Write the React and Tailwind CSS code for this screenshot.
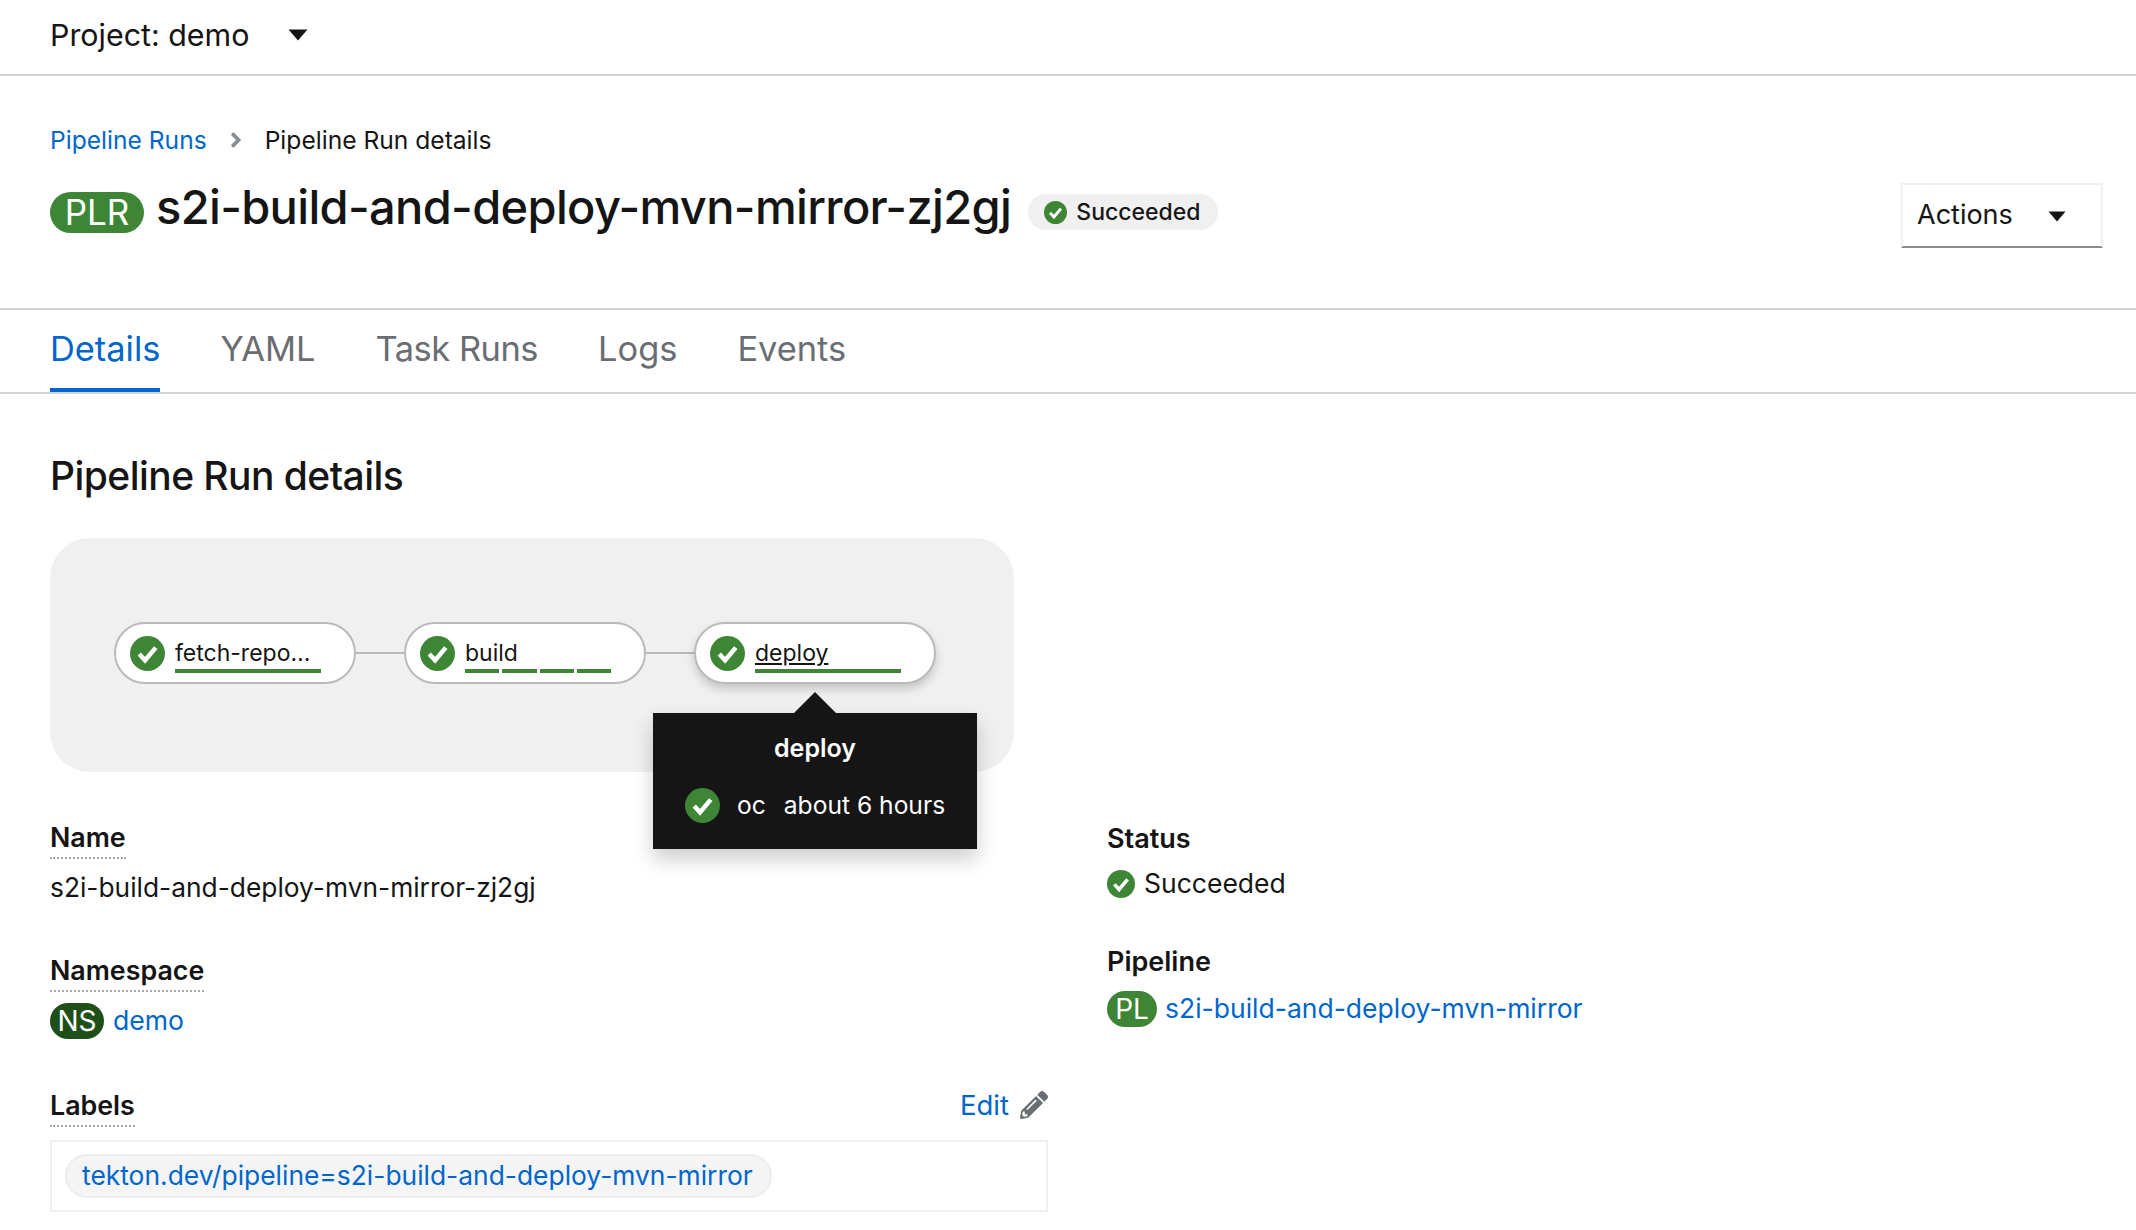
import React from "react";
import { FaAngleRight, FaPencilAlt } from "react-icons/fa";

const FONT = { fontFamily: '"Inter", "Noto Sans", sans-serif' };

const CheckIcon = ({ className }) => (
  <svg viewBox="0 0 36 36" className={className}>
    <circle cx="18" cy="18" r="18" fill="#3e8635" />
    <path d="M9.5 18.5 L15.5 25 L26.5 12" fill="none" stroke="#fff" strokeWidth="4.6" />
  </svg>
);

const Caret = ({ className }) => (
  <svg viewBox="0 0 20 12" className={className}>
    <path d="M0.5 0.5 H19.5 L10 11.5 Z" fill="#151515" />
  </svg>
);

const Node = ({ label, segments, hovered }) => (
  <div
    className={`flex h-[62px] w-[242px] shrink-0 items-start rounded-[31px] border-2 border-[#b8bbbe] bg-white pl-[14px] pt-[12px] ${
      hovered ? "shadow-[0_5px_10px_rgba(3,3,3,0.18)]" : ""
    }`}
  >
    <CheckIcon className="h-[35px] w-[35px] shrink-0" />
    <div className="ml-[10px] mt-[2px] w-[146px]">
      <div className={`h-[30px] text-[23px] leading-[30px] text-[#151515] ${hovered ? "underline" : ""}`}>{label}</div>
      <div className="mt-px flex h-1 gap-[3px]">
        {Array.from({ length: segments }).map((_, i) => (
          <div key={i} className="h-1 flex-1 bg-[#3e8635]" />
        ))}
      </div>
    </div>
  </div>
);

const Connector = () => <div className="h-[2px] w-[48px] shrink-0 bg-[#b8bbbe]" />;

const Label = ({ children }) => (
  <div className="inline-block h-[38px] border-b-2 border-dotted border-[#a8a8a8] text-[26.8px] font-semibold leading-[32px] text-[#151515]">
    {children}
  </div>
);

export default function App() {
  return (
    <div style={FONT} className="h-[1230px] w-[2136px] overflow-hidden bg-white text-[#151515]">
      {/* Project bar */}
      <div className="flex h-[76px] items-center border-b-2 border-[#d2d2d2] pb-[4px] pl-[50px]">
        <span className="text-[30.4px] leading-[40px]">Project: demo</span>
        <Caret className="ml-[39px] h-[12px] w-[20px]" />
      </div>

      {/* Page heading */}
      <div className="h-[234px] border-b-2 border-[#d2d2d2] pl-[50px] pr-[33px] pt-[48px]">
        <div className="flex h-[32px] items-center text-[24.6px] leading-[32px]">
          <a className="text-[#06c]">Pipeline Runs</a>
          <FaAngleRight className="mx-[17px] text-[#8a8d90]" size={24} />
          <span>Pipeline Run details</span>
        </div>
        <div className="mt-[27px] flex h-[64px] items-center justify-between">
          <div className="flex items-center">
            <span className="mb-[5px] flex h-[41px] w-[94px] items-center justify-center rounded-[21px] bg-[#3e8635] text-[35px] text-white">
              PLR
            </span>
            <h1 className="mb-[16px] ml-[12px] text-[47px] font-medium leading-[48px] tracking-[-0.66px]">
              s2i-build-and-deploy-mvn-mirror-zj2gj
            </h1>
            <span className="mb-[6px] ml-[17px] flex h-[36px] w-[190px] items-center rounded-[18px] bg-[#f0f0f0] pl-[16px] text-[23px] font-medium">
              <CheckIcon className="mr-[9px] h-[23px] w-[23px]" />
              Succeeded
            </span>
          </div>
          <button className="flex h-[65px] w-[202px] items-center border-x-2 border-y-2 border-[#f0f0f0] border-b-[#8a8d90] pl-[14px] text-left text-[27px]">
            Actions
            <Caret className="ml-[35px] mt-[2px] h-[11px] w-[18px]" />
          </button>
        </div>
      </div>

      {/* Tabs */}
      <div className="flex h-[84px] gap-[60px] border-b-2 border-[#d2d2d2] pl-[50px]">
        {["Details", "YAML", "Task Runs", "Logs", "Events"].map((tab, i) => (
          <div
            key={tab}
            className={`flex h-[82px] items-center border-b-4 text-[34.4px] ${
              i === 0 ? "border-[#06c] text-[#06c]" : "border-transparent text-[#6a6e73]"
            } ${i === 2 ? "tracking-[-0.45px]" : ""}`}
          >
            {tab}
          </div>
        ))}
      </div>

      <div className="pl-[50px]">
        <h2 className="mt-[58px] text-[39px] font-medium leading-[48px] tracking-[-0.55px]">Pipeline Run details</h2>

        {/* Pipeline graph */}
        <div className="relative mt-[38px] h-[234px] w-[964px] rounded-[40px] bg-[#f0f0f0] pl-[64px] pt-[84px]">
          <div className="flex items-center">
            <Node label="fetch-repo…" segments={1} />
            <Connector />
            <Node label="build" segments={4} />
            <Connector />
            <Node label="deploy" segments={1} hovered />
          </div>
          <div className="absolute left-[603px] top-[175px] h-[136px] w-[324px] bg-[#151515] text-white shadow-[0_10px_20px_rgba(3,3,3,0.2)]">
            <svg viewBox="0 0 42 21" className="absolute left-[141px] top-[-21px] h-[21px] w-[42px]">
              <path d="M0 21 L21 0 L42 21 Z" fill="#151515" />
            </svg>
            <div className="mt-[19px] text-center text-[25px] font-semibold leading-[32px]">deploy</div>
            <div className="ml-[32px] mt-[24px] flex items-center text-[24.6px] leading-[35px]">
              <CheckIcon className="h-[35px] w-[35px]" />
              <span className="ml-[17px]">oc</span>
              <span className="ml-[18px]">about 6 hours</span>
            </div>
          </div>
        </div>

        {/* Details */}
        <div className="flex items-start">
          <div className="w-[998px]">
            <div className="mt-[49px]"><Label>Name</Label></div>
            <div className="mt-[12px] text-[26.35px] leading-[32px]">s2i-build-and-deploy-mvn-mirror-zj2gj</div>

            <div className="mt-[51px]"><Label>Namespace</Label></div>
            <div className="mt-[9px] flex items-center text-[26.6px]">
              <span className="flex h-[36px] w-[54px] items-center justify-center rounded-[18px] bg-[#1e4f18] text-[28px] text-white">NS</span>
              <a className="ml-[9px] text-[#06c]">demo</a>
            </div>

            <div className="mt-[48px] flex items-start justify-between">
              <Label>Labels</Label>
              <div className="flex items-center text-[#06c]">
                <a className="text-[27.5px] leading-[32px]">Edit</a>
                <FaPencilAlt className="ml-[11px] text-[#6a6e73]" size={28} />
              </div>
            </div>
            <div className="mt-[13px] flex h-[72px] items-center border-2 border-[#f0f0f0] pl-[13px]">
              <span className="flex h-[44px] w-[707px] items-center rounded-[22px] border-2 border-[#ededed] bg-[#f5f5f5] pl-[15px] text-[26.4px] text-[#06c]">
                tekton.dev/pipeline=s2i-build-and-deploy-mvn-mirror
              </span>
            </div>
          </div>

          <div className="ml-[59px]">
            <div className="mt-[51px] text-[27px] font-semibold leading-[32px]">Status</div>
            <div className="mt-[15px] flex h-[28px] items-center text-[26.5px]">
              <CheckIcon className="h-[28px] w-[28px]" />
              <span className="ml-[9px]">Succeeded</span>
            </div>
            <div className="mt-[48px] text-[27px] font-semibold leading-[32px]">Pipeline</div>
            <div className="mt-[13px] flex h-[36px] items-center text-[26.5px]">
              <span className="flex h-[36px] w-[50px] items-center justify-center rounded-[18px] bg-[#3e8635] text-[28px] text-white">PL</span>
              <a className="ml-[8px] text-[#06c]">s2i-build-and-deploy-mvn-mirror</a>
            </div>
          </div>
        </div>
      </div>
    </div>
  );
}
